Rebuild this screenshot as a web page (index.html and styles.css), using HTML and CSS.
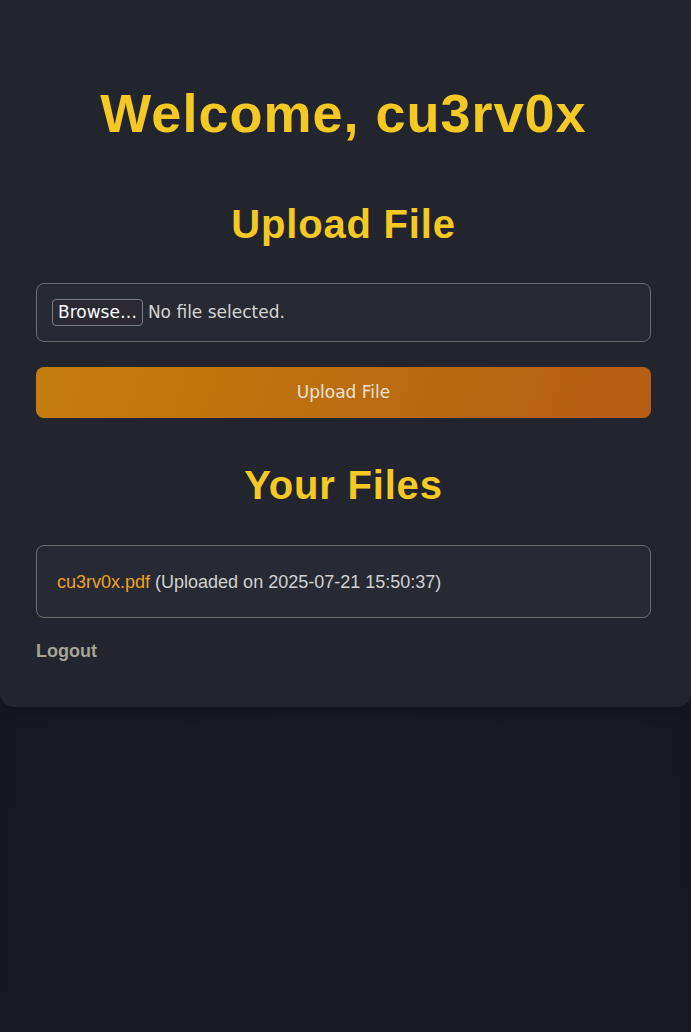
FILE: index.html
```html
<!DOCTYPE html>
<html lang="en">
<head>
<meta charset="utf-8">
<title>Dashboard</title>
<link rel="stylesheet" href="styles.css">
</head>
<body>
<div class="container">
  <h1 class="title">Welcome, cu3rv0x</h1>
  <h2 class="section-title">Upload File</h2>
  <form class="upload-form">
    <label class="file-input">
      <span class="file-btn">Browse…</span>
      <span class="file-label">No file selected.</span>
    </label>
    <button type="button" class="upload-btn">Upload File</button>
  </form>
  <h2 class="section-title files-title">Your Files</h2>
  <ul class="file-list">
    <li class="file-item"><a class="file-link" href="#">cu3rv0x.pdf</a> (Uploaded on 2025-07-21 15:50:37)</li>
  </ul>
  <a class="logout" href="#">Logout</a>
</div>
</body>
</html>
```
FILE: styles.css
```css
html, body {
  margin: 0;
  padding: 0;
}
body {
  min-height: 100vh;
  background: radial-gradient(ellipse at 50% 100%, #181b24 0%, #161921 60%, #15171f 100%);
  font-family: "Liberation Sans", Arial, sans-serif;
}
.container {
  background: #22252e;
  border-radius: 0 0 14px 14px;
  padding: 82px 40px 45px 36px;
  box-shadow: 0 4px 12px rgba(0, 0, 0, 0.2);
}
.title {
  margin: 0;
  font-size: 54px;
  line-height: 62px;
  font-weight: 700;
  letter-spacing: 1px;
  color: #f4c923;
  text-align: center;
}
.section-title {
  margin: 57px 0 0;
  font-size: 40px;
  line-height: 46px;
  font-weight: 700;
  letter-spacing: 0.8px;
  color: #f4c923;
  text-align: center;
}
.files-title {
  margin-top: 44px;
}
.upload-form {
  margin: 36px 0 0;
  display: flex;
  flex-direction: column;
  gap: 25px;
}
.file-input {
  display: flex;
  align-items: center;
  gap: 5px;
  padding: 15px;
  background: #272a33;
  border: 1px solid #6f6d69;
  border-radius: 8px;
  font-family: "DejaVu Sans", sans-serif;
  font-size: 17px;
  color: #d6d4d0;
}
.file-btn {
  display: inline-block;
  padding: 3px 5px;
  line-height: 19px;
  border: 1px solid #7c7b82;
  border-radius: 4px;
  background: #2b2a33;
  color: #fbfbfe;
}
.file-label {
  line-height: 19px;
}
.upload-btn {
  display: block;
  width: 100%;
  padding: 15px;
  border: none;
  border-radius: 8px;
  background: linear-gradient(110deg, #c47e0d 0%, #bc6c10 55%, #b45d14 100%);
  color: #ece3d6;
  font-family: "DejaVu Sans", sans-serif;
  font-size: 17px;
  line-height: 21px;
}
.file-list {
  list-style: none;
  margin: 37px 0 0;
  padding: 0;
}
.file-item {
  padding: 21px 20px 20px;
  line-height: 30px;
  background: #272a33;
  border: 1px solid #6f6d69;
  border-radius: 8px;
  font-size: 18px;
  color: #d2d1cf;
}
.file-link {
  color: #eea223;
  text-decoration: none;
}
.logout {
  display: inline-block;
  margin-top: 22px;
  font-size: 18px;
  line-height: 22px;
  font-weight: 700;
  color: #a8a398;
  text-decoration: none;
}
```
